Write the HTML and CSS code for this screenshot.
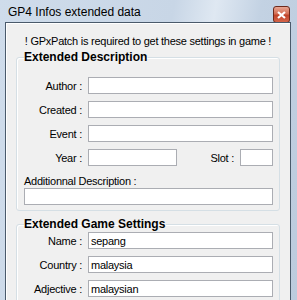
FILE: index.html
```html
<!DOCTYPE html>
<html lang="en">

<head>
    <meta charset="UTF-8">
    <title>GP4 Infos extended data</title>
    <link rel="stylesheet" href="styles.css">
</head>

<body>
    <div class="window">
        <div class="titlebar">
            <span class="title">GP4 Infos extended data</span>
            <div class="close">
                <svg width="9" height="8" viewBox="0 0 9 8">
                    <path d="M1 1 L8 7 M8 1 L1 7" stroke="#fff" stroke-width="2.2" fill="none"/>
                </svg>
            </div>
        </div>

        <div class="client">
            <p class="notice">! GPxPatch is required to get these settings in game !</p>

            <fieldset class="group">
                <legend>Extended Description</legend>
                <div class="rows">
                    <label>Author :</label><input type="text">
                    <label>Created :</label><input type="text">
                    <label>Event :</label><input type="text">
                    <label>Year :</label>
                    <div class="year-row">
                        <input type="text" class="year">
                        <label>Slot :</label>
                        <input type="text" class="slot">
                    </div>
                </div>
                <label class="wide-label">Additionnal Description :</label>
                <input type="text" class="wide">
            </fieldset>

            <fieldset class="group game">
                <legend>Extended Game Settings</legend>
                <div class="rows">
                    <label>Name :</label><input type="text" value="sepang">
                    <label>Country :</label><input type="text" value="malaysia">
                    <label>Adjective :</label><input type="text" value="malaysian">
                </div>
            </fieldset>
        </div>
    </div>
</body>

</html>
```

FILE: styles.css
```css
body {
    margin: 0;
    font-family: "Liberation Sans", Arial, sans-serif;
    font-size: 11px;
    letter-spacing: -0.25px;
}

.window {
    width: 297px;
    height: 300px;
    overflow: hidden;
    display: flex;
    flex-direction: column;
    background: linear-gradient(100deg, #cfdceb 0%, #c8d6e6 50%, #dfe8f2 62%, #c3d2e3 75%, #bccbdd 100%);
}

.titlebar {
    height: 22px;
    flex: none;
    display: flex;
    align-items: center;
    justify-content: space-between;
    padding: 0 7px 0 8px;
}

.title {
    font-size: 12px;
    letter-spacing: 0;
    color: #000;
    padding-top: 2px;
}

.close {
    width: 15px;
    height: 15px;
    margin-top: 7px;
    border: 1px solid #6d2a1c;
    border-radius: 3px;
    background: linear-gradient(#e8a592 0%, #d46f55 45%, #c1442a 55%, #d5654a 100%);
    display: flex;
    align-items: center;
    justify-content: center;
}

.client {
    flex: 1;
    margin: 0 6px 0 5px;
    border: 1px solid #4a5a6b;
    border-bottom: none;
    box-shadow: inset 1px 1px 0 #fff;
    background: #f0f0f0;
    padding: 0 10px 0 10px;
}

.notice {
    margin: 12px 0 3px 0;
    text-align: center;
    line-height: 13px;
}

.group {
    margin: 0;
    padding: 2px 6px 5px 7px;
    border: 1px solid #d5dfe5;
    border-radius: 3px;
    box-shadow: inset 1px 1px 0 #fff;
}

.group + .group {
    margin-top: 7px;
}

legend {
    font-weight: bold;
    font-size: 12px;
    letter-spacing: 0;
    padding: 0 1px 0 0;
    margin-left: 0;
    line-height: 12px;
}

.rows {
    display: grid;
    grid-template-columns: 58px 1fr;
    column-gap: 6px;
    row-gap: 7px;
    align-items: center;
    margin-top: 12px;
}

.game .rows {
    margin-top: 0;
}

.rows label {
    text-align: right;
}

.year-row {
    display: flex;
    align-items: center;
}

.year-row label {
    flex: 1;
    padding-right: 6px;
}

input {
    height: 17px;
    box-sizing: border-box;
    border: 1px solid #abadb3;
    background: #fff;
    font-family: inherit;
    font-size: 11px;
    letter-spacing: inherit;
    padding: 0 2px;
    margin: 0;
    width: 100%;
}

input.year {
    width: 89px;
}

input.slot {
    width: 33px;
}

.wide-label {
    display: block;
    margin-top: 9px;
    line-height: 13px;
}

input.wide {
    display: block;
    margin-top: 0;
}
```
